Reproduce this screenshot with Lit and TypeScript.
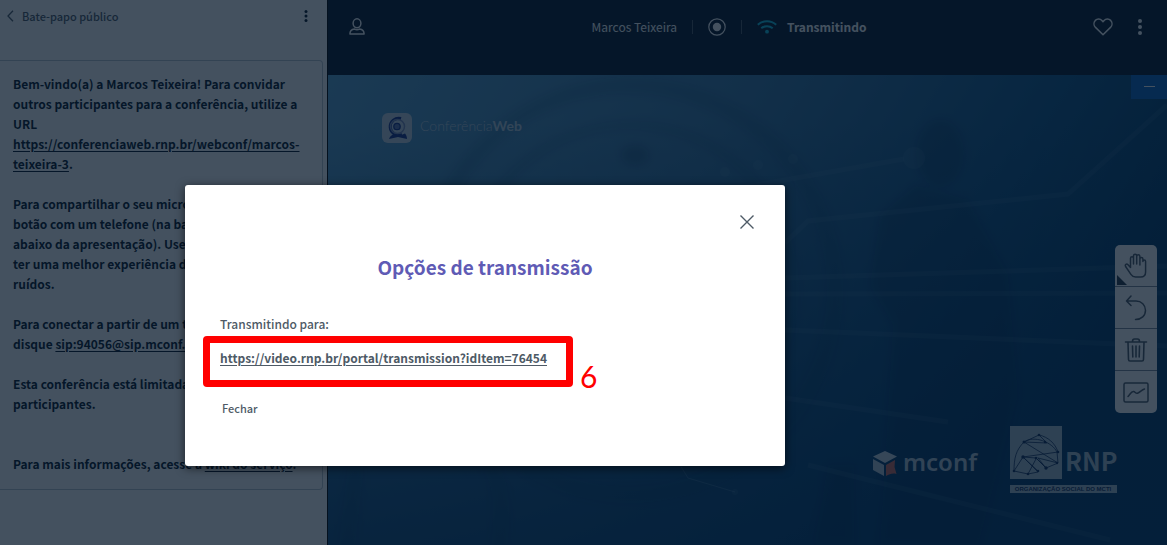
import { LitElement, html, css, svg } from "lit";
import { customElement } from "lit/decorators.js";

const FONT = css`"Source Sans Pro", "Noto Sans CJK SC", "Noto Sans", sans-serif`;

const buttonReset = css`
  button {
    display: grid;
    place-items: center;
    margin: 0;
    padding: 0;
    border: 0;
    background: none;
    color: inherit;
    font: inherit;
    cursor: pointer;
  }
  svg {
    display: block;
  }
`;

const dots = svg`<g fill="currentColor"><circle cx="3" cy="3" r="2"/><circle cx="3" cy="9" r="2"/><circle cx="3" cy="15" r="2"/></g>`;

@customElement("chat-panel")
export class ChatPanel extends LitElement {
  static styles = [
    buttonReset,
    css`
      :host {
        display: block;
        background: #fff;
        color: #06172a;
        border-right: 1px solid #000;
      }
      .head {
        display: flex;
        align-items: center;
        justify-content: space-between;
        height: 32px;
        padding: 0 18px 0 7px;
      }
      .back {
        display: flex;
        gap: 8px;
        color: #4e5a66;
        font-size: 11px;
        font-weight: 500;
        line-height: 18px;
        padding-bottom: 1px;
      }
      .message {
        margin: 28px 4px 0 0;
        padding: 13px 12px 15px 13px;
        border: 1px solid #bcc6d0;
        border-left: 0;
        border-radius: 0 4px 4px 0;
        font-size: 12px;
        font-weight: 600;
        line-height: 20px;
        white-space: nowrap;
      }
      p {
        margin: 0 0 20px;
      }
      p.last {
        margin: 40px 0 0;
      }
      a {
        color: inherit;
        text-underline-offset: 2px;
      }
      b {
        font-weight: 700;
      }
    `,
  ];

  render() {
    return html`
      <div class="head">
        <button class="back">
          <svg width="7" height="12" viewBox="0 0 7 12" fill="none" stroke="currentColor" stroke-width="1.3"><path d="M6 .8 1 6l5 5.200"/></svg>
          Bate-papo público
        </button>
        <button aria-label="Opções do bate-papo"><svg width="6" height="18" viewBox="-1 -1 8 20">${dots}</svg></button>
      </div>
      <section class="message">
        <p>
          Bem-vindo(a) a <b>Marcos Teixeira</b>! Para convidar<br />outros participantes para a conferência, utilize a<br />URL<br /><a
            href="#webconf"
            >https://conferenciaweb.rnp.br/webconf/marcos-<br />teixeira-3</a
          >.
        </p>
        <p>
          Para compartilhar o seu microfone, use o<br />botão com um telefone (na barra<br />abaixo da apresentação). Use fones para<br />ter
          uma melhor experiência de áudio, sem<br />ruídos.
        </p>
        <p>Para conectar a partir de um telefone,<br />disque <a href="#sip">sip:94056@sip.mconf.com</a></p>
        <p>Esta conferência está limitada a 75<br /><b>participantes.</b></p>
        <p class="last">Para mais informações, acesse a <a href="#wiki">wiki do serviço</a>.</p>
      </section>
    `;
  }
}

@customElement("nav-bar")
export class NavBar extends LitElement {
  static styles = [
    buttonReset,
    css`
      :host {
        display: flex;
        justify-content: space-between;
        align-items: center;
        height: 53px;
        padding: 0 24px 22px 21px;
        background: #06172a;
        color: #fff;
      }
      .title,
      .right {
        display: flex;
        align-items: center;
      }
      .title {
        gap: 15px;
        font-size: 12px;
        line-height: 20px;
      }
      h1 {
        margin: 0;
        font: inherit;
        font-weight: 400;
      }
      .rule {
        width: 1px;
        height: 14px;
        background: #4e5a66;
      }
      .live {
        display: flex;
        align-items: center;
        gap: 10px;
        font-weight: 700;
      }
      .right {
        gap: 24px;
      }
    `,
  ];

  render() {
    return html`
      <button aria-label="Usuários">
        <svg width="16" height="17" viewBox="0 0 16 17" fill="none" stroke="currentColor" stroke-width="1.5">
          <ellipse cx="8" cy="5.300" rx="3.900" ry="4.500" />
          <path d="M.9 16c0-3 2-4.600 4.600-4.900 1.600.9 3.400.9 5 0 2.600.3 4.600 1.900 4.600 4.900z" stroke-linejoin="round" />
        </svg>
      </button>
      <div class="title">
        <h1>Marcos Teixeira</h1>
        <span class="rule"></span>
        <button aria-label="Gravação">
          <svg width="18" height="18" viewBox="0 0 18 18"><circle cx="9" cy="9" r="8.200" fill="none" stroke="currentColor" stroke-width="1.200" /><circle cx="9" cy="9" r="4.200" fill="currentColor" /></svg>
        </button>
        <span class="rule"></span>
        <span class="live">
          <svg width="20" height="14" viewBox="0 0 20 14" fill="none" stroke="#12c4e4" stroke-width="2">
            <path d="M.8 4.800c5.200-4.700 13.200-4.700 18.400 0M4.300 8.300c3.200-2.900 8.200-2.900 11.400 0" />
            <circle cx="10" cy="11.700" r="1.900" fill="#12c4e4" stroke="none" />
          </svg>
          Transmitindo
        </span>
      </div>
      <div class="right">
        <button aria-label="Favoritar">
          <svg width="20" height="18" viewBox="0 0 20 18" fill="none" stroke="currentColor" stroke-width="1.500" stroke-linejoin="round">
            <path d="M10 16.800 2.500 9.400C.6 7.400.5 4.300 2.300 2.400 4.200.5 7.200.6 8.900 2.400L10 3.700l1.100-1.300c1.700-1.800 4.700-1.900 6.600 0 1.800 1.900 1.700 5-.2 7z" />
          </svg>
        </button>
        <button aria-label="Opções"><svg width="6" height="18" viewBox="0 0 6 18">${dots}</svg></button>
      </div>
    `;
  }
}

@customElement("slide-view")
export class SlideView extends LitElement {
  static styles = [
    buttonReset,
    css`
      :host {
        display: block;
        position: relative;
        overflow: hidden;
        background: #003f68;
      }
      .art {
        position: absolute;
        inset: 0;
        width: 100%;
        height: 100%;
      }
      .minimize {
        position: absolute;
        top: 0;
        right: 0;
        width: 36px;
        height: 24px;
        background: #0a64c4;
        color: #fff;
      }
      .tools {
        position: absolute;
        top: 170px;
        right: 10px;
        width: 42px;
        border-radius: 5px;
        background: #fff;
        color: #4e5a66;
        overflow: hidden;
      }
      .tool {
        width: 42px;
        height: 42px;
        border-bottom: 1px solid #7c8896;
      }
      .tool:last-child {
        border-bottom: 0;
      }
      .tool.corner {
        position: relative;
      }
      .tool.corner::before {
        content: "";
        position: absolute;
        left: 2px;
        bottom: 1px;
        width: 10px;
        height: 10px;
        background: #2a3848;
        clip-path: polygon(0 0, 100% 100%, 0 100%);
      }
      .brand-thin {
        font: 300 14px Lato, sans-serif;
      }
      .brand-bold {
        font-weight: 700;
      }
      .mconf {
        font: 600 24px "Noto Sans", sans-serif;
      }
      .rnp {
        font: 700 25px "Noto Sans CJK SC", sans-serif;
      }
      .org {
        font: 700 6px "Liberation Sans", sans-serif;
      }
    `,
  ];

  render() {
    return html`
      <svg class="art" viewBox="0 0 839 470" preserveAspectRatio="xMidYMid slice">
        <defs>
          <linearGradient id="base" x1="0" y1="0" x2="1" y2=".35">
            <stop offset="0" stop-color="#5aa3d0" />
            <stop offset=".45" stop-color="#3a7aa8" />
            <stop offset=".8" stop-color="#0d5285" />
            <stop offset="1" stop-color="#003a68" />
          </linearGradient>
          <linearGradient id="fall" x1="0" y1="0" x2="0" y2="1">
            <stop offset=".1" stop-color="#00396c" stop-opacity="0" />
            <stop offset="1" stop-color="#00396c" stop-opacity=".75" />
          </linearGradient>
          <filter id="soft"><feGaussianBlur stdDeviation="4" /></filter>
        </defs>
        <rect width="839" height="470" fill="url(#base)" />
        <rect width="839" height="470" fill="url(#fall)" />
        <g filter="url(#soft)" fill="none" stroke="#0d2f58" stroke-opacity=".14" stroke-width="16">
          <circle cx="302" cy="215" r="205" />
          <circle cx="302" cy="215" r="165" stroke-width="8" />
          <path d="M160 390q20 20 10 90M28 390l-10 90" />
        </g>
        <g filter="url(#soft)" fill="#001c48" fill-opacity=".24">
          <ellipse cx="612" cy="78" rx="24" ry="34" />
          <path d="M588 110 552 140 542 210 565 250 552 470H650L690 320 680 200 640 125z" />
          <ellipse cx="307" cy="80" rx="14" ry="10" />
          <path d="M500 390h26v80h-40z" />
        </g>
        <g fill="none" stroke="#9cc4dc" stroke-opacity=".09" stroke-width="5">
          <path d="M400 115 576 84" />
          <path d="M457 168 480 146 740 119 839 30" />
          <path d="M457 203 839 191M457 219 839 218M457 255 839 271M457 323 620 347" />
          <path d="M480 390 782 465" />
        </g>
        <g fill="#9cc4dc" fill-opacity=".09">
          <circle cx="586" cy="83" r="11" />
          <circle cx="430" cy="90" r="5" />
          <circle cx="465" cy="84" r="5" />
          <circle cx="397" cy="97" r="5" />
          <circle cx="407" cy="417" r="3" />
        </g>
        <path d="M352 390 360 403 407 417" fill="none" stroke="#9cc4dc" stroke-opacity=".22" />

        <g>
          <rect x="54" y="38" width="30" height="30" rx="6" fill="#c4d4e2" />
          <path d="M61 64c1-3 3-4 5-5l6 1.500 5-2c1 1 2 3 2 5.500l-9-2z" fill="#16328c" />
          <path d="M73 43.500a8.500 8.500 0 1 0 1 16" fill="none" stroke="#16328c" stroke-width="3" />
          <circle cx="69.500" cy="51.500" r="7" fill="none" stroke="#7a8cbc" stroke-width="1.500" />
          <circle cx="69" cy="51.500" r="3.200" fill="#5c74b4" stroke="#16328c" stroke-width="1.300" />
          <text class="brand-thin" x="92" y="56" fill="#b8cfe0">Conferência<tspan class="brand-bold">Web</tspan></text>
        </g>

        <g>
          <path d="m557 376 12 5.500-12 6.500-12-6.500z" fill="#c8d8e4" />
          <path d="m545 384 11 6v11l-11-6z" fill="#b4c6d6" />
          <path d="m558 390 9-5-.5 7 2 7c-4-1-7 0-10.500 2z" fill="#d06a5c" />
          <text class="mconf" x="575" y="396" fill="#b4c8d8">mconf</text>
        </g>

        <g>
          <rect x="682" y="351" width="52" height="53" fill="#a8bece" />
          <g fill="none" stroke="#0c2c5c" stroke-width=".8">
            <path d="M686 396c0-13 2-21 10-29 10-7 28 0 33 10l1 11-12 5-10-10-13-1-9 14 14 3 9-17M700 399l10-2-15-15 35-5M696 367l15-7 8 8-23-1 34 21M711 360c9 2 16 8 19 17M708 383l10 10-8-10 20 5M695 382l15 14" />
          </g>
          <g fill="#0c2c5c">
            <circle cx="711" cy="360" r="1.300" /><circle cx="696" cy="367" r="1.500" /><circle cx="717" cy="367" r="1.200" />
            <circle cx="730" cy="377" r="1.300" /><circle cx="695" cy="382" r="1.700" /><circle cx="708" cy="383" r="1.300" />
            <circle cx="718" cy="393" r="1.700" /><circle cx="729" cy="388" r="1.200" /><circle cx="686" cy="396" r="1.300" />
            <circle cx="700" cy="399" r="1.300" /><circle cx="710" cy="396" r="1.300" />
          </g>
          <text class="rnp" x="737" y="396" fill="#a8bece">RNP</text>
          <rect x="682" y="410" width="107" height="8" fill="#a8bece" />
          <text class="org" x="735" y="416" text-anchor="middle" fill="#0c2c5c">ORGANIZAÇÃO SOCIAL DO MCTI</text>
        </g>
      </svg>
      <button class="minimize" aria-label="Minimizar apresentação">
        <svg width="11" height="2" viewBox="0 0 11 2"><path d="M0 .5h11" stroke="currentColor" /></svg>
      </button>
      <div class="tools">
        <button class="tool corner" aria-label="Mover">
          <svg width="24" height="26" viewBox="0 0 24 26" fill="none" stroke="currentColor" stroke-width="1.500" stroke-linecap="round" stroke-linejoin="round">
            <path d="M6.500 14.500V5.200c0-2 3-2 3 0V11M9.500 11V3c0-2.300 3.200-2.300 3.200 0v8M12.700 11V3.500c0-2.200 3.200-2.200 3.200 0V12M15.900 12V6c0-2 3-2 3 0v2.500c0-2 2.700-2 2.700 0V19c0 3-2 5-5 5h-5c-2 0-3.500-.8-4.700-2.600L1.600 13.500c-1-2 1-3.200 2.400-1.700l2.500 2.700" />
          </svg>
        </button>
        <button class="tool" aria-label="Desfazer">
          <svg width="22" height="26" viewBox="0 0 22 26" fill="none" stroke="currentColor" stroke-width="1.500" stroke-linecap="round" stroke-linejoin="round">
            <path d="M6 1 1.500 6 6 10.500M1.500 6H11c5.500 0 9.500 4 9.500 9.300s-4 9.200-10 9.200" />
          </svg>
        </button>
        <button class="tool" aria-label="Limpar">
          <svg width="24" height="26" viewBox="0 0 24 26" fill="none" stroke="currentColor" stroke-width="1.600" stroke-linecap="round" stroke-linejoin="round">
            <path d="M1.500 5h21M4 5.500 4.500 22.500c0 1 .5 1.500 1.500 1.500h12c1 0 1.500-.5 1.500-1.500L20 5.500M8.500 4.500c0-2 .5-2.500 2-2.500h3c1.500 0 2 .5 2 2.500M8.500 9l.3 11M12 9v11M15.500 9l-.3 11" />
          </svg>
        </button>
        <button class="tool" aria-label="Anotações de vários usuários">
          <svg width="26" height="21" viewBox="0 0 26 21" fill="none" stroke="currentColor" stroke-width="1.500" stroke-linecap="round" stroke-linejoin="round">
            <rect x="1" y="1" width="24" height="19" rx="1.500" />
            <path d="M5 14.500c2.500-3 3.500-5.300 5.500-5 2 .3 2 2.500 4.500 1.500s3.500-3 6.500-4" />
          </svg>
        </button>
      </div>
    `;
  }
}

@customElement("stream-dialog")
export class StreamDialog extends LitElement {
  static styles = [
    buttonReset,
    css`
      :host {
        display: block;
        box-sizing: border-box;
        width: 600px;
        padding: 29px 30px 30px;
        border-radius: 3px;
        background: #fff;
        color: #4e5a66;
        box-shadow: 0 2px 10px rgba(0, 0, 0, 0.6);
        font-size: 12px;
        line-height: 20px;
      }
      .close {
        margin-left: auto;
        width: 16px;
        height: 16px;
      }
      h2 {
        margin: 22px 0 0;
        color: #5f5bb5;
        text-align: center;
        font-size: 19px;
        font-weight: 700;
        line-height: 30px;
      }
      .body {
        padding: 32px 5px 0;
      }
      p {
        margin: 0;
        font-weight: 500;
      }
      .link {
        position: relative;
        margin: 14px 0 30px;
      }
      a {
        color: inherit;
        font-weight: 700;
        text-underline-offset: 2px;
      }
      .frame {
        position: absolute;
        inset: -12px auto auto -17px;
        box-sizing: border-box;
        width: 370px;
        height: 51px;
        border: 7px solid #f00;
        border-radius: 4px;
        pointer-events: none;
      }
      .step {
        position: absolute;
        top: 10px;
        left: 360px;
        color: #f00;
        font: 400 30px/36px Lato, sans-serif;
      }
      .dismiss {
        margin: 0 0 18px 2px;
        font-size: 11px;
        font-weight: 500;
      }
    `,
  ];

  render() {
    return html`
      <button class="close" aria-label="Fechar janela">
        <svg width="14" height="14" viewBox="0 0 14 14" stroke="#4e5a66" stroke-width="1.400"><path d="m.5.5 13 13M13.500.5l-13 13" /></svg>
      </button>
      <h2>Opções de transmissão</h2>
      <div class="body">
        <p>Transmitindo para:</p>
        <div class="link">
          <a href="#transmission">https://video.rnp.br/portal/transmission?idItem=76454</a>
          <span class="frame"></span>
          <span class="step">6</span>
        </div>
        <button class="dismiss">Fechar</button>
      </div>
    `;
  }
}

@customElement("app-root")
export class AppRoot extends LitElement {
  static styles = css`
    :host {
      display: grid;
      grid-template-columns: 328px 1fr;
      position: relative;
      min-height: 100vh;
      overflow: hidden;
      font-family: ${FONT};
    }
    .main {
      display: grid;
      grid-template-rows: auto 1fr;
    }
    .overlay {
      position: absolute;
      inset: 0;
      box-sizing: border-box;
      padding: 185px 0 0 185px;
      background: rgba(6, 23, 42, 0.75);
    }
  `;

  render() {
    return html`
      <chat-panel></chat-panel>
      <main class="main">
        <nav-bar></nav-bar>
        <slide-view></slide-view>
      </main>
      <div class="overlay">
        <stream-dialog role="dialog" aria-label="Opções de transmissão"></stream-dialog>
      </div>
    `;
  }
}
